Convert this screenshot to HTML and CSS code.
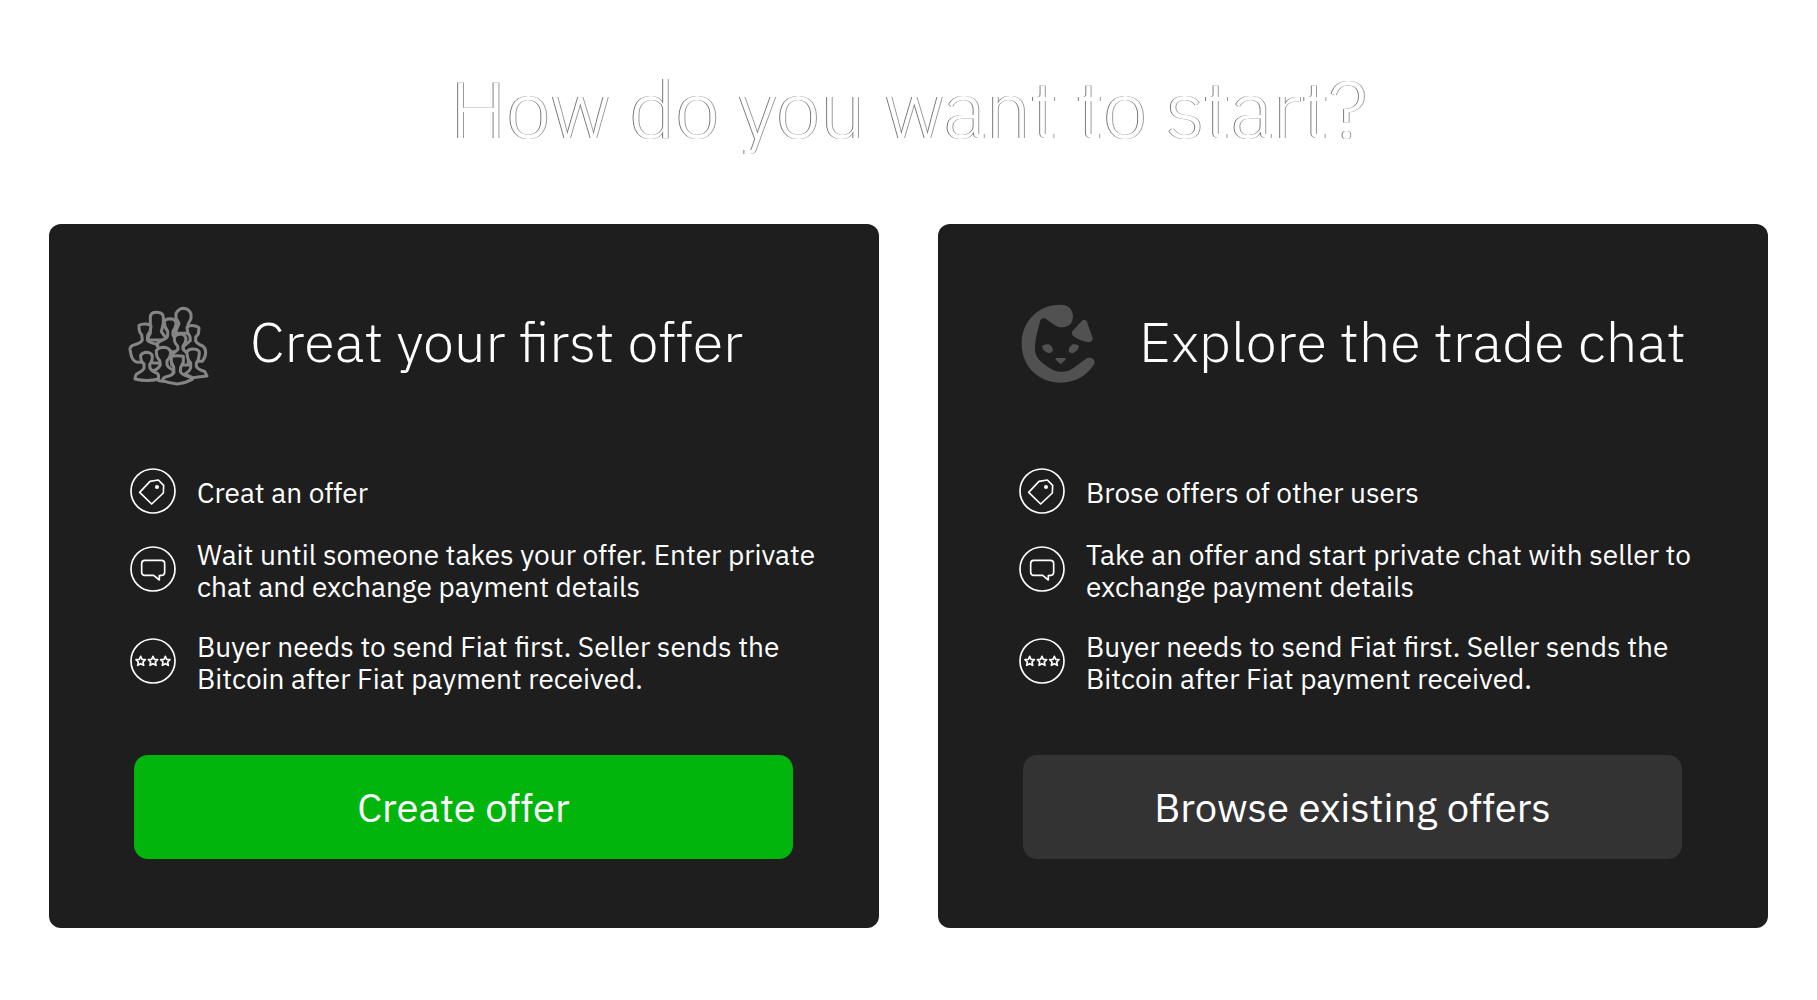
FILE: index.html
```html
<!DOCTYPE html>
<html lang="en">
<head>
  <meta charset="utf-8">
  <meta name="viewport" content="width=device-width, initial-scale=1">
  <title>How do you want to start?</title>
  <link rel="stylesheet" href="styles.css">
</head>
<body>
  <svg class="symbols" aria-hidden="true">
    <symbol id="icon-tag" viewBox="27 23 144 144">
      <circle cx="99" cy="95" r="66"/>
      <path d="M59 99 L90 66 L115 62 L131 78 L130 101 L95 134 Z"/>
      <circle class="dot" cx="111" cy="83" r="6"/>
    </symbol>
    <symbol id="icon-chat" viewBox="27 258 144 144">
      <circle cx="99" cy="330" r="66"/>
      <path d="M74 304 H124 Q134 304 134 314 V338 Q134 349 124 349 L118 350 V363 L101 349 H74 Q65 349 65 339 V314 Q65 304 74 304 Z"/>
    </symbol>
    <symbol id="icon-stars" viewBox="27 527 144 144">
      <circle cx="99" cy="599" r="66"/>
      <path id="star" d="M62 585 L66 594 L76 595 L69 602 L71 612 L62 607 L53 612 L55 602 L48 595 L58 594 Z"/>
      <use href="#star" x="37"/>
      <use href="#star" x="74"/>
    </symbol>
  </svg>

  <main class="page">
    <h1 class="page-title">How do you want to start?</h1>

    <div class="cards">
      <section class="card">
        <header class="card-header">
          <svg class="card-icon people" viewBox="57 42 240 234" aria-hidden="true">
            <path d="M121 130 V80 Q122 67 140 67 Q160 67 160 82 V100 L154 125 L172 150 H110 Z"/>
            <path d="M207 100 L198 84 V70 Q207 55 221 55 Q236 56 243 72 V86 L234 103 V115 L250 130 H195 Z"/>
            <path d="M173 137 V124 Q163 112 163 97 Q164 86 181 86 Q198 87 198 101 Q197 114 189 124 V136 L205 152 V185 H155 L143 172 V160 Q146 154 158 150 Q172 145 173 137 Z"/>
            <path d="M97 150 L95 134 Q86 126 87 106 Q96 101 108 102 Q120 103 123 108 Q122 126 113 136 L112 150 Q117 158 138 162 L150 180 V220 L80 216 Q70 214 64 198 L60 178 Q59 171 68 166 Q94 159 97 150 Z"/>
            <path d="M241 152 L240 140 Q231 128 231 112 Q238 106 250 107 Q263 108 267 114 L265 132 L257 141 V153 Q261 161 278 168 Q287 174 287 187 Q287 202 277 214 H220 V170 Z"/>
            <path d="M204 178 L203 168 Q192 158 193 142 Q199 132 211 132 Q225 133 228 146 Q227 160 219 168 V178 L235 192 V225 H185 L190 190 Z"/>
            <path d="M151 224 L149 211 Q138 202 139 182 Q146 172 161 172 Q178 173 182 186 Q182 202 171 212 V224 Q174 233 190 240 L185 270 L158 274 Q139 273 135 262 L128 243 Q147 236 151 224 Z"/>
            <path d="M242 233 V218 Q231 209 231 185 Q238 176 250 177 Q264 177 268 186 Q268 207 259 219 V229 Q263 238 284 244 L291 258 Q272 260 248 263 L225 252 Q241 242 242 233 Z"/>
            <path d="M102 235 V222 Q91 213 92 196 Q98 187 110 187 Q124 188 127 198 Q127 215 119 223 L120 234 Q125 244 142 250 Q148 256 145 267 Q112 276 75 267 Q76 252 83 250 Q99 243 102 235 Z"/>
            <path d="M192 247 L191 231 L184 216 V199 Q202 196 220 199 V216 L212 232 L211 245 Q216 255 237 260 L247 268 Q225 280 202 282 Q177 280 158 272 Q158 263 169 260 Q188 256 192 247 Z"/>
          </svg>
          <h2 class="card-title">Creat your first offer</h2>
        </header>

        <ul class="steps">
          <li class="step">
            <svg class="step-icon" aria-hidden="true"><use href="#icon-tag"/></svg>
            <span>Creat an offer</span>
          </li>
          <li class="step">
            <svg class="step-icon" aria-hidden="true"><use href="#icon-chat"/></svg>
            <span>Wait until someone takes your offer. Enter private chat and exchange payment details</span>
          </li>
          <li class="step">
            <svg class="step-icon" aria-hidden="true"><use href="#icon-stars"/></svg>
            <span>Buyer needs to send Fiat first. Seller sends the Bitcoin after Fiat payment received.</span>
          </li>
        </ul>

        <div class="card-action">
          <button class="button button-primary" type="button">Create offer</button>
        </div>
      </section>

      <section class="card">
        <header class="card-header">
          <svg class="card-icon cat" viewBox="54 42 240 234" aria-hidden="true">
            <path d="M181 44 C112 44 65 96 65 161 C65 230 118 278 182 278 C225 278 264 256 284 220 C286 208 274 202 262 204 C240 217 222 236 205 242 C190 247 172 246 158 239 C138 228 116 215 107 192 C103 178 106 150 111 130 L121 91 Q124 83 135 85 L158 101 C170 110 182 114 194 111 C210 108 218 97 219 80 C219 58 205 44 181 44 Z"/>
            <path d="M246 92 Q254 86 260 94 L278 144 Q279 155 266 157 Q236 152 217 136 Q213 130 217 124 Z"/>
            <path d="M126 168 Q133 161 147 163 Q160 170 158 184 Q153 191 142 188 Q128 183 126 168 Z"/>
            <path d="M237 168 Q230 161 218 163 Q205 171 206 184 Q210 191 221 188 Q235 182 237 168 Z"/>
            <path d="M169 204 H195 Q199 206 196 210 L182 223 L168 210 Q164 206 169 204 Z"/>
          </svg>
          <h2 class="card-title">Explore the trade chat</h2>
        </header>

        <ul class="steps">
          <li class="step">
            <svg class="step-icon" aria-hidden="true"><use href="#icon-tag"/></svg>
            <span>Brose offers of other users</span>
          </li>
          <li class="step">
            <svg class="step-icon" aria-hidden="true"><use href="#icon-chat"/></svg>
            <span>Take an offer and start private chat with seller to exchange payment details</span>
          </li>
          <li class="step">
            <svg class="step-icon" aria-hidden="true"><use href="#icon-stars"/></svg>
            <span>Buyer needs to send Fiat first. Seller sends the Bitcoin after Fiat payment received.</span>
          </li>
        </ul>

        <div class="card-action">
          <button class="button" type="button">Browse existing offers</button>
        </div>
      </section>
    </div>
  </main>
</body>
</html>
```
FILE: styles.css
```css
* {
  box-sizing: border-box;
}

body {
  margin: 0;
  background: #fff;
  color: #fff;
  font-family: "IBM Plex Sans", Roboto, sans-serif;
}

.symbols {
  display: block;
  width: 0;
  height: 0;
}

.page {
  padding: 60px 49px 72px;
}

/* White letters, edged on their left and right sides only */
.page-title {
  margin: 0 0 68px;
  font-size: 80px;
  font-weight: 300;
  line-height: 96px;
  text-align: center;
  text-shadow: -1px 0 #777, 1px 0 #999;
}

.cards {
  display: grid;
  grid-template-columns: repeat(auto-fit, minmax(min(100%, 640px), 1fr));
  gap: 59px;
}

.card {
  padding: 80px 40px 69px 80px;
  border-radius: 12px;
  background: #1e1e1e;
}

.card-header {
  display: flex;
  align-items: center;
  gap: 41px;
}

.card-icon {
  flex: none;
  width: 80px;
  height: 78px;
  overflow: visible;
}

.people {
  fill: #1e1e1e;
  stroke: #858585;
  stroke-width: 9;
  stroke-linejoin: round;
}

.cat {
  fill: #515151;
}

.card-title {
  margin: 0 0 4px;
  font-size: 56px;
  font-weight: 300;
  line-height: 64px;
}

.steps {
  margin: 85px 0 0;
  padding: 0;
  list-style: none;
}

.step {
  display: flex;
  align-items: center;
  gap: 20px;
  margin-bottom: 28px;
  font-size: 28px;
  line-height: 32px;
}

.step:first-child {
  margin-bottom: 20px;
}

.step:last-child {
  margin-bottom: 0;
}

.step-icon {
  flex: none;
  width: 48px;
  height: 48px;
  margin-bottom: 4px;
  fill: none;
  stroke: #fff;
  stroke-width: 5;
  stroke-linejoin: round;
}

.dot {
  fill: #fff;
  stroke: none;
}

.card-action {
  margin-top: 60px;
  padding: 0 46px 0 5px;
}

.button {
  display: block;
  width: 100%;
  padding: 28px 16px;
  border: 0;
  border-radius: 14px;
  background: #333;
  color: #fff;
  font: inherit;
  font-size: 40px;
  line-height: 48px;
  cursor: pointer;
}

.button-primary {
  background: #02b50c;
}
```
